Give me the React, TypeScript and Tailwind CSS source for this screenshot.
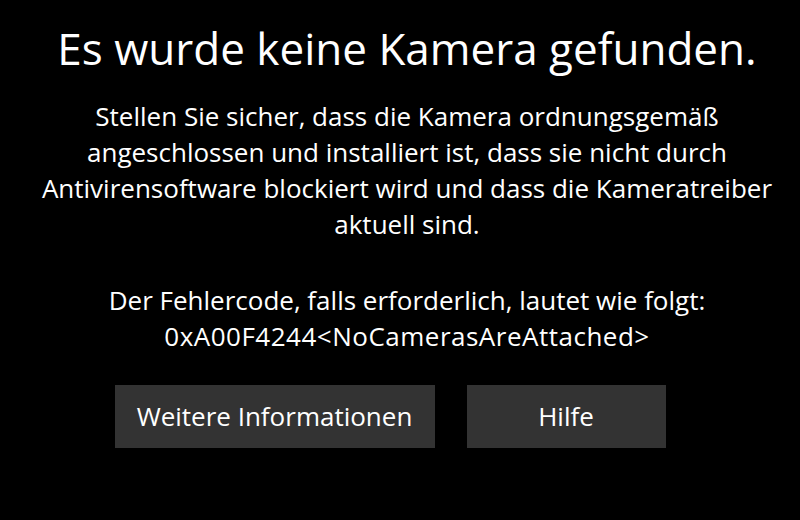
import React from "react";

const bodyLines = [
  "Stellen Sie sicher, dass die Kamera ordnungsgemäß",
  "angeschlossen und installiert ist, dass sie nicht durch",
  "Antivirensoftware blockiert wird und dass die Kameratreiber",
  "aktuell sind.",
];

export default function App() {
  return (
    <div
      className="w-[800px] h-[520px] bg-black text-white flex flex-col items-center overflow-hidden"
      style={{ fontFamily: '"Segoe UI", "Open Sans", "Noto Sans", sans-serif' }}
    >
      {/* Title */}
      <h1 className="pl-[14px] mt-[18px] text-[44px] leading-[60px] font-normal whitespace-nowrap">
        Es wurde keine Kamera gefunden.
      </h1>

      {/* Message */}
      <div className="pl-[14px] mt-[20px] text-[26px] leading-[36px] text-center whitespace-nowrap">
        {bodyLines.map((line) => (
          <div key={line}>{line}</div>
        ))}
        <div className="h-[40px]" />
        <div>Der Fehlercode, falls erforderlich, lautet wie folgt:</div>
        <div className="tracking-[0.5px]">0xA00F4244&lt;NoCamerasAreAttached&gt;</div>
      </div>

      {/* Buttons */}
      <div className="mt-[31px] flex gap-[32px] pr-[20px]">
        <button className="w-[320px] h-[63px] bg-[#333333] text-[26px] text-white">
          Weitere Informationen
        </button>
        <button className="w-[199px] h-[63px] bg-[#333333] text-[26px] text-white">
          Hilfe
        </button>
      </div>
    </div>
  );
}
